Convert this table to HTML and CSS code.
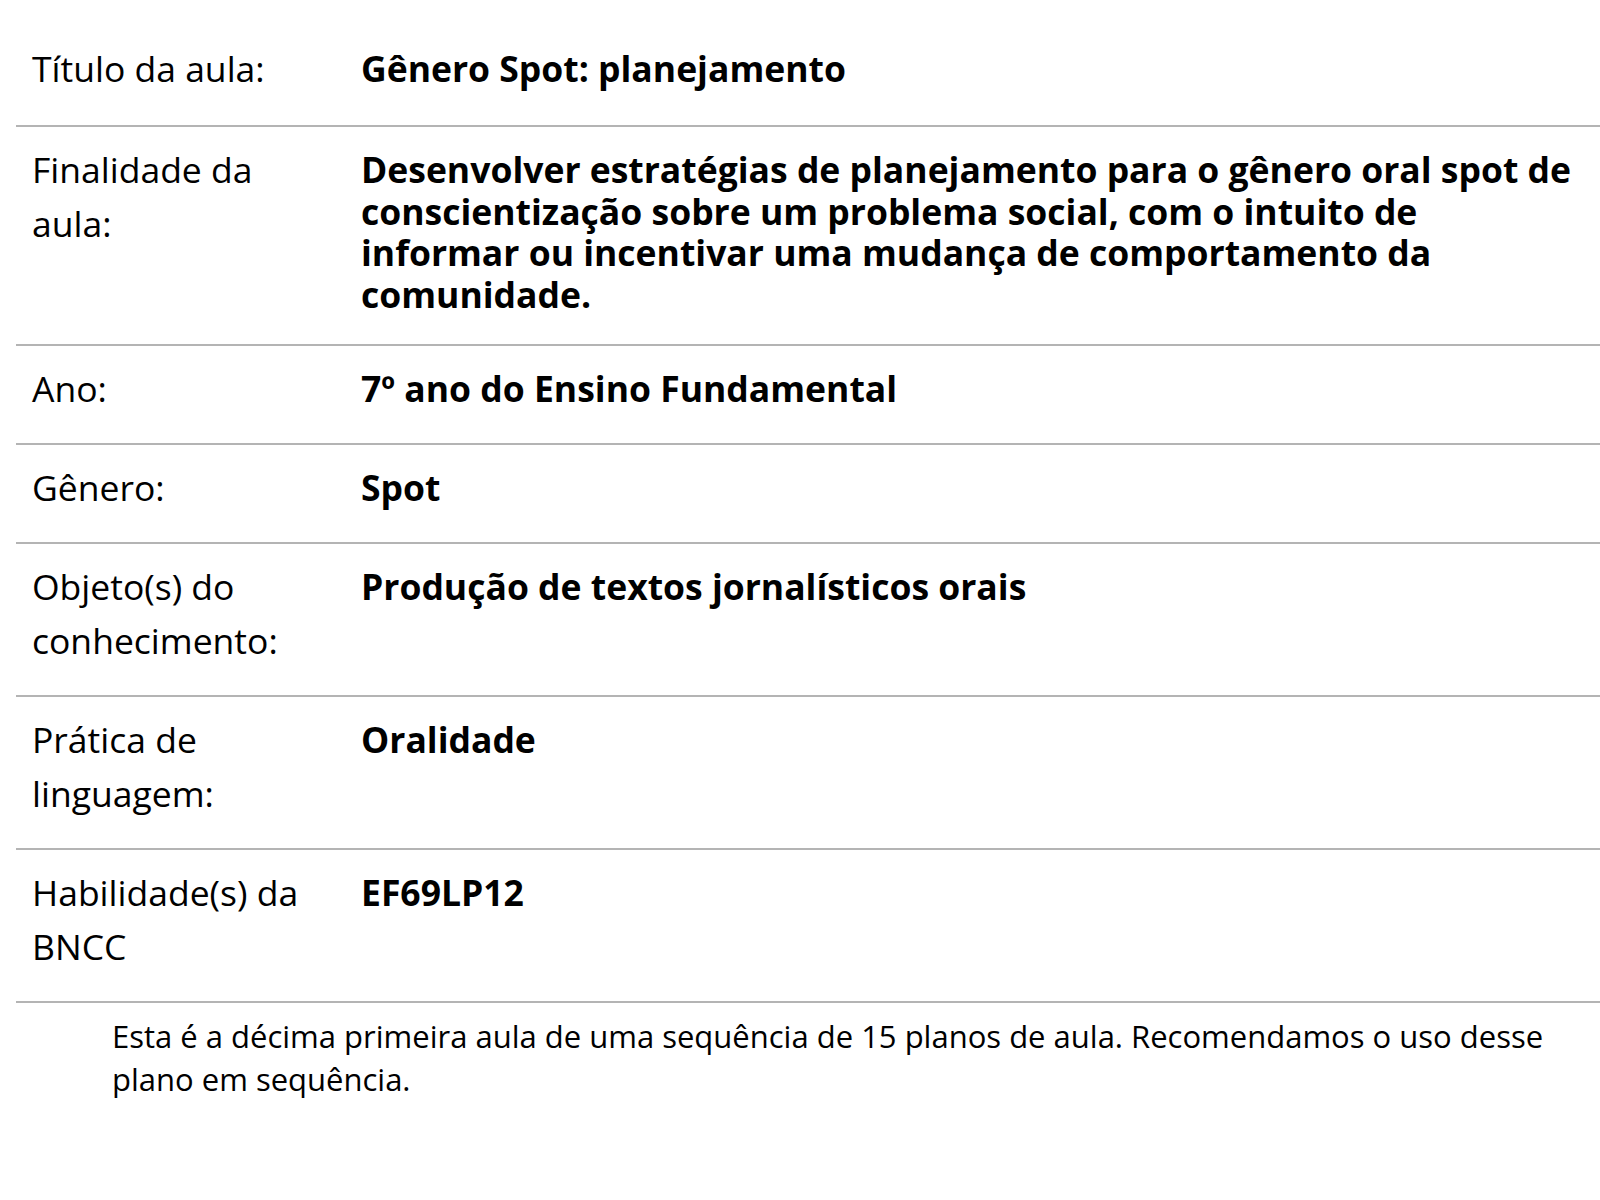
FILE: index.html
```html
<!DOCTYPE html>
<html lang="pt-BR">
<head>
<meta charset="utf-8">
<title>Plano de aula</title>
<link rel="stylesheet" href="styles.css">
</head>
<body>
<div class="page">
  <div class="table">
    <div class="row row-first">
      <div class="label">Título da aula:</div>
      <div class="value">Gênero Spot: planejamento</div>
    </div>
    <div class="row">
      <div class="label">Finalidade da aula:</div>
      <div class="value">Desenvolver estratégias de planejamento para o gênero oral spot de conscientização sobre um problema social, com o intuito de informar ou incentivar uma mudança de comportamento da comunidade.</div>
    </div>
    <div class="row">
      <div class="label">Ano:</div>
      <div class="value">7º ano do Ensino Fundamental</div>
    </div>
    <div class="row">
      <div class="label">Gênero:</div>
      <div class="value">Spot</div>
    </div>
    <div class="row">
      <div class="label">Objeto(s) do conhecimento:</div>
      <div class="value">Produção de textos jornalísticos orais</div>
    </div>
    <div class="row">
      <div class="label">Prática de linguagem:</div>
      <div class="value">Oralidade</div>
    </div>
    <div class="row">
      <div class="label">Habilidade(s) da BNCC</div>
      <div class="value">EF69LP12</div>
    </div>
  </div>
  <p class="note">Esta é a décima primeira aula de uma sequência de 15 planos de aula. Recomendamos o uso desse plano em sequência.</p>
</div>
</body>
</html>
```
FILE: styles.css
```css
html, body {
  margin: 0;
  padding: 0;
  background: #ffffff;
}

body {
  font-family: "Open Sans", "Noto Sans", "Liberation Sans", sans-serif;
  color: #000000;
}

.page {
  padding: 26px 0 0 16px;
}

.table {
  display: flex;
  flex-direction: column;
}

.row {
  display: grid;
  grid-template-columns: 345px 1fr;
  align-items: baseline;
  padding: 15px 0 28px 0;
  border-bottom: 2px solid #b4b4b4;
}

.row-first {
  padding-bottom: 30px;
}

.label {
  padding-left: 16px;
  padding-right: 36px;
  font-size: 35.5px;
  line-height: 54px;
  font-weight: 400;
}

.value {
  padding-right: 24px;
  font-size: 35.5px;
  line-height: 41.7px;
  font-weight: 700;
}

.note {
  margin: 12px 0 0 0;
  padding: 0 16px 0 96px;
  font-size: 31px;
  line-height: 43px;
}
```
